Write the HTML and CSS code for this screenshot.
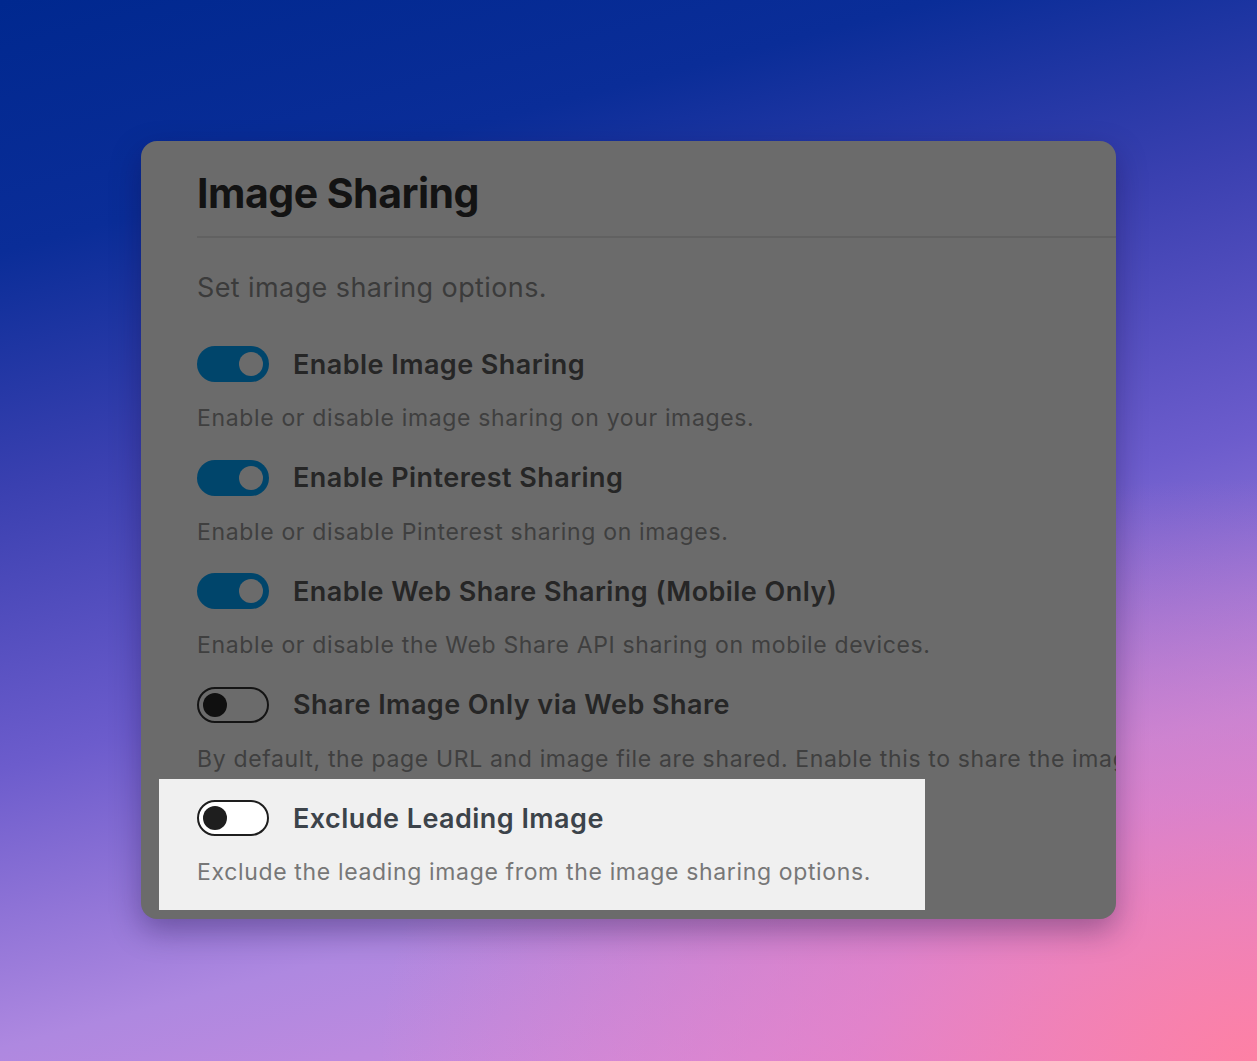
FILE: index.html
```html
<!DOCTYPE html>
<html lang="en">
<head>
<meta charset="utf-8">
<title>Image Sharing</title>
<link rel="stylesheet" href="styles.css">
</head>
<body>
<div class="stage">
  <section class="card">
    <div class="inner">
      <h1 class="title">Image Sharing</h1>
      <div class="divider"></div>
      <p class="subtitle">Set image sharing options.</p>
      <div class="rows">
        <div class="row">
          <div class="head"><span class="toggle on"><span class="knob"></span></span><span class="label">Enable Image Sharing</span></div>
          <p class="desc">Enable or disable image sharing on your images.</p>
        </div>
        <div class="row">
          <div class="head"><span class="toggle on"><span class="knob"></span></span><span class="label">Enable Pinterest Sharing</span></div>
          <p class="desc">Enable or disable Pinterest sharing on images.</p>
        </div>
        <div class="row">
          <div class="head"><span class="toggle on"><span class="knob"></span></span><span class="label">Enable Web Share Sharing (Mobile Only)</span></div>
          <p class="desc">Enable or disable the Web Share API sharing on mobile devices.</p>
        </div>
        <div class="row">
          <div class="head"><span class="toggle off"><span class="knob"></span></span><span class="label">Share Image Only via Web Share</span></div>
          <p class="desc">By default, the page URL and image file are shared. Enable this to share the image only.</p>
        </div>
        <div class="row highlight">
          <div class="head"><span class="toggle off"><span class="knob"></span></span><span class="label">Exclude Leading Image</span></div>
          <p class="desc">Exclude the leading image from the image sharing options.</p>
        </div>
      </div>
    </div>
  </section>
</div>
</body>
</html>
```
FILE: styles.css
```css
html, body {
  margin: 0;
  padding: 0;
}
body {
  width: 1257px;
  height: 1061px;
  overflow: hidden;
  font-family: Inter, "Noto Sans", "Liberation Sans", sans-serif;
  background:
    radial-gradient(ellipse 70% 55% at 100% 100%, rgba(255,128,162,0.95) 0%, rgba(240,125,190,0.6) 45%, rgba(240,125,190,0) 100%),
    linear-gradient(165deg, #00288f 0%, #0a2d98 18%, #3a40b0 35%, #6c5ccc 55%, #ae88e0 75%, #cc8cde 90%, #e08ad0 100%);
}
.stage {
  padding: 141px 0 0 141px;
}
.card {
  width: 975px;
  height: 778px;
  box-sizing: border-box;
  background: #6b6b6b;
  border-radius: 16px;
  overflow: hidden;
  box-shadow: 0 12px 30px rgba(20, 10, 60, 0.35);
  padding: 27px 0 0 56px;
}
.inner {
  width: 1300px;
}
.title {
  margin: 0;
  font-size: 41px;
  line-height: 50px;
  font-weight: 700;
  color: #131313;
  letter-spacing: -0.5px;
}
.divider {
  margin-top: 18px;
  height: 2px;
  background: #616161;
}
.subtitle {
  margin: 32px 0 0;
  font-size: 27px;
  line-height: 36px;
  color: #3b3b3b;
  letter-spacing: 0.4px;
}
.rows {
  margin-top: 40px;
  display: flex;
  flex-direction: column;
  gap: 26.5px;
}
.row {
  display: flex;
  flex-direction: column;
  gap: 21px;
}
.head {
  display: flex;
  align-items: center;
  gap: 24px;
  height: 36px;
}
.label {
  font-size: 27px;
  font-weight: 600;
  color: #262626;
  letter-spacing: 0.45px;
  white-space: nowrap;
}
.desc {
  margin: 0;
  font-size: 23px;
  line-height: 30px;
  color: #3f3f3f;
  letter-spacing: 0.65px;
  white-space: nowrap;
}
.toggle {
  position: relative;
  flex: none;
  width: 72px;
  height: 36px;
  box-sizing: border-box;
  border-radius: 18px;
}
.toggle .knob {
  position: absolute;
  top: 6px;
  width: 24px;
  height: 24px;
  border-radius: 50%;
}
.toggle.on {
  background: #00456b;
}
.toggle.on .knob {
  right: 6px;
  background: #6b6b6b;
}
.toggle.off {
  border: 2px solid #141414;
}
.toggle.off .knob {
  top: 4px;
  left: 4px;
  background: #101010;
}
.row.highlight {
  width: 766px;
  box-sizing: border-box;
  margin: -21px 0 0 -38px;
  padding: 21px 0 23px 38px;
  background: #f0f0f0;
}
.highlight .toggle.off {
  border-color: #1e1e1e;
  background: #ffffff;
}
.highlight .toggle.off .knob {
  background: #1e1e1e;
}
.highlight .label {
  color: #3c434a;
}
.highlight .desc {
  color: #777777;
}
```
